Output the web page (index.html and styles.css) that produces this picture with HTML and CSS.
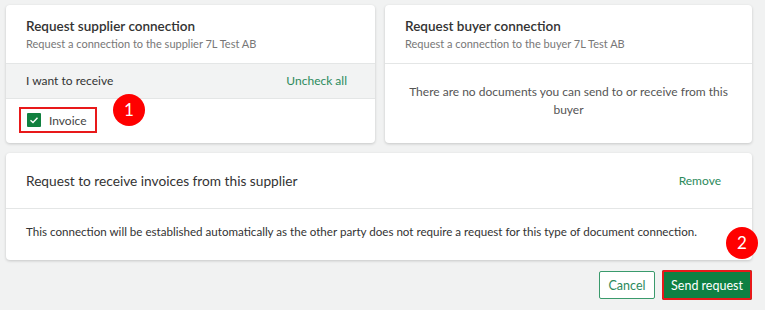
FILE: index.html
```html
<!DOCTYPE html>
<html>
  <head>
    <meta charset="utf-8">
    <title>Request connection</title>
    <link rel="stylesheet" href="styles.css">
  </head>
  <body>
    <div class="page">
      <div class="cards">
        <div class="card">
          <div class="card-head">
            <h2>Request supplier connection</h2>
            <p>Request a connection to the supplier 7L Test AB</p>
          </div>
          <div class="section-bar">
            <span>I want to receive</span>
            <a class="link">Uncheck all</a>
          </div>
          <div class="options">
            <label class="check marked">
              <span class="box">
                <svg width="10" height="10" viewBox="0 0 10 10"><path d="M1.5 5.2 L4 7.5 L8.5 2.8" fill="none" stroke="#fff" stroke-width="1.4"/></svg>
              </span>
              Invoice
            </label>
            <span class="badge badge-one">1</span>
          </div>
        </div>
        <div class="card">
          <div class="card-head">
            <h2>Request buyer connection</h2>
            <p>Request a connection to the buyer 7L Test AB</p>
          </div>
          <div class="empty">There are no documents you can send to or receive from this buyer</div>
        </div>
      </div>

      <div class="card request">
        <div class="request-head">
          <h3>Request to receive invoices from this supplier</h3>
          <a class="link">Remove</a>
        </div>
        <div class="request-body">
          This connection will be established automatically as the other party does not require a request for this type of document connection.
        </div>
        <span class="badge badge-two">2</span>
      </div>

      <div class="actions">
        <button class="btn btn-ghost">Cancel</button>
        <button class="btn btn-primary marked">Send request</button>
      </div>
    </div>
  </body>
</html>
```

FILE: styles.css
```css
* {
  margin: 0;
  box-sizing: border-box;
}

html,
body {
  height: 100%;
}

body {
  background-color: #f1f2f2;
  font-family: "Segoe UI", Lato, "Open Sans", sans-serif;
  color: #333;
}

.page {
  width: 746px;
  padding: 5px 0 0 0;
  margin-left: 6px;
}

.cards {
  display: grid;
  grid-template-columns: 369px 1fr;
  grid-gap: 10px;
}

.card {
  position: relative;
  background-color: #fff;
  border-radius: 4px;
  box-shadow: 0 1px 3px rgba(0, 0, 0, 0.18);
}

.card-head {
  height: 59px;
  padding: 12px 20px 0;
  border-bottom: 1px solid #e4e6e6;
}

.card-head h2 {
  font-size: 13.5px;
  font-weight: 600;
  line-height: 19px;
  color: #333;
}

.card-head p {
  font-size: 11px;
  line-height: 16px;
  color: #777;
}

.section-bar {
  display: flex;
  justify-content: space-between;
  align-items: center;
  height: 35px;
  padding: 0 28px 2px 20px;
  background-color: #f2f3f3;
  border-bottom: 1px solid #e4e6e6;
  font-size: 12px;
}

.link {
  color: #2c8a5c;
  font-size: 12px;
  cursor: pointer;
}

.options {
  position: relative;
  height: 44px;
  padding: 8px 0 0 13px;
}

.check {
  display: inline-flex;
  align-items: center;
  gap: 8px;
  height: 26px;
  padding: 0 10px 0 8px;
  font-size: 12px;
  color: #444;
}

.check .box {
  display: inline-flex;
  align-items: center;
  justify-content: center;
  width: 14px;
  height: 14px;
  background-color: #11803f;
  border-radius: 1px;
}

.marked {
  outline: 2px solid #e8191a;
  outline-offset: -2px;
}

.empty {
  padding: 19px 24px 0;
  text-align: center;
  font-size: 12px;
  line-height: 18px;
  color: #555;
}

.request {
  margin-top: 10px;
  height: 107px;
}

.request-head {
  display: flex;
  justify-content: space-between;
  align-items: center;
  height: 56px;
  padding: 0 31px 0 20px;
  border-bottom: 1px solid #e4e6e6;
}

.request-head h3 {
  font-size: 13.7px;
  font-weight: 400;
  color: #333;
}

.request-body {
  padding: 16px 20px 0;
  font-size: 11.6px;
  color: #333;
}

.badge {
  position: absolute;
  display: inline-block;
  width: 32px;
  height: 32px;
  line-height: 32px;
  border-radius: 50%;
  background-color: #f00;
  color: #fff;
  text-align: center;
  font-size: 17px;
}

.badge-one {
  left: 107px;
  top: -5px;
}

.badge-two {
  right: -6px;
  bottom: 1px;
}

.actions {
  display: flex;
  justify-content: flex-end;
  gap: 7px;
  margin-top: 10px;
}

.btn {
  height: 30px;
  font-family: inherit;
  font-size: 12.5px;
  border-radius: 2px;
  cursor: pointer;
}

.btn-ghost {
  width: 56px;
  height: 28px;
  margin-top: 1px;
  background-color: #fff;
  border: 1px solid #3a9a6c;
  color: #2c8a5c;
}

.btn-primary {
  width: 90px;
  background-color: #0f8043;
  border: none;
  color: #fff;
}
```
